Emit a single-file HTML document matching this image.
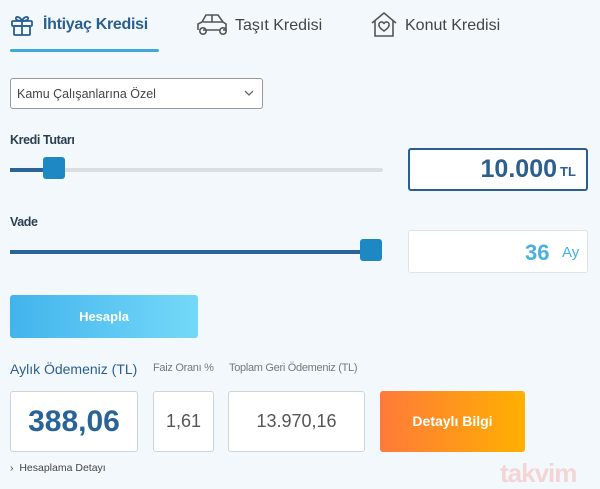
<!DOCTYPE html>
<html><head><meta charset="utf-8"><style>
*{margin:0;padding:0;box-sizing:border-box}
body{width:600px;height:487px;background:#f3f8fc;font-family:"Liberation Sans",sans-serif;position:relative;overflow:hidden}
.a{position:absolute;white-space:nowrap}
.box{position:absolute;background:#fff;border:1px solid #cfd4d8;border-radius:3px}
</style></head><body>
<svg class="a" style="left:10px;top:13px" width="24" height="24" viewBox="0 0 24 24" fill="none" stroke="#2a5f8f" stroke-width="1.8"><rect x="2" y="8" width="20" height="5" rx="1"/><rect x="4" y="13" width="16" height="9" rx="1"/><path d="M12 8v14M12 8C10 3 5 3 6 6c1 2 6 2 6 2M12 8c2-5 7-5 6-2-1 2-6 2-6 2"/></svg>
<div class="a" style="left:43px;top:16px;font-size:16px;font-weight:bold;color:#2a5f8f;letter-spacing:-0.3px">İhtiyaç Kredisi</div>
<div class="a" style="left:10px;top:49px;width:149px;height:3px;background:#3fa9d8;border-radius:2px"></div>
<svg class="a" style="left:195px;top:12px" width="34" height="26" viewBox="0 0 34 26" fill="none" stroke="#555" stroke-width="1.6"><path d="M3 18v-6l4-2 4-7h12l5 7 3 2v6h-3M8 18h17M8 10h20M17 3v7"/><circle cx="8" cy="19" r="3.2"/><circle cx="28" cy="19" r="3.2"/></svg>
<div class="a" style="left:235px;top:17px;font-size:16px;color:#444">Taşıt Kredisi</div>
<svg class="a" style="left:370px;top:10px" width="28" height="28" viewBox="0 0 28 28" fill="none" stroke="#555" stroke-width="1.6"><path d="M2 13L14 3l12 10M5 11v15h18V11"/><path d="M14 21c-4-3-5-4-5-6a2.5 2.5 0 015-1 2.5 2.5 0 015 1c0 2-1 3-5 6z"/></svg>
<div class="a" style="left:405px;top:17px;font-size:16px;color:#444">Konut Kredisi</div>
<div class="box" style="left:10px;top:78px;width:253px;height:31px;border-color:#999;background:#fff"></div>
<div class="a" style="left:17px;top:87px;font-size:12.5px;color:#444">Kamu Çalışanlarına Özel</div>
<svg class="a" style="left:243px;top:89px" width="12" height="8" viewBox="0 0 12 8" fill="none" stroke="#666" stroke-width="1.3"><path d="M2 2l4 4 4-4"/></svg>
<div class="a" style="left:10px;top:133px;font-size:12.5px;font-weight:bold;color:#2b3e50;letter-spacing:-0.4px">Kredi Tutarı</div>
<div class="a" style="left:10px;top:168px;width:373px;height:4px;background:#dcdfe2;border-radius:2px"></div>
<div class="a" style="left:10px;top:168px;width:40px;height:4px;background:#2a6496"></div>
<div class="a" style="left:43px;top:157px;width:22px;height:22px;background:#1e88c4;border-radius:3px"></div>
<div class="box" style="left:408px;top:148px;width:180px;height:43px;border:2px solid #2a5f8f"></div>
<div class="a" style="left:470px;top:155px;width:87px;text-align:right;font-size:25px;font-weight:bold;color:#2a5f8f">10.000</div>
<div class="a" style="left:560px;top:164px;font-size:13px;font-weight:bold;color:#2a5f8f">TL</div>
<div class="a" style="left:10px;top:215px;font-size:12.5px;font-weight:bold;color:#2b3e50;letter-spacing:-0.4px">Vade</div>
<div class="a" style="left:10px;top:250px;width:365px;height:4px;background:#2a6496"></div>
<div class="a" style="left:360px;top:239px;width:22px;height:22px;background:#1e88c4;border-radius:3px"></div>
<div class="box" style="left:408px;top:230px;width:180px;height:43px;border-color:#dfe3e6"></div>
<div class="a" style="left:525px;top:240px;font-size:22px;font-weight:bold;color:#4ab0e0">36</div>
<div class="a" style="left:562px;top:244px;font-size:15px;color:#4ab0e0">Ay</div>
<div class="a" style="left:10px;top:295px;width:188px;height:43px;border-radius:3px;background:linear-gradient(90deg,#42b4ec,#74d9f8);color:#fff;font-size:13px;font-weight:bold;text-align:center;line-height:43px">Hesapla</div>
<div class="a" style="left:10px;top:361px;font-size:14px;color:#2a5f8f">Aylık Ödemeniz (TL)</div>
<div class="a" style="left:153px;top:362px;font-size:11px;color:#777;letter-spacing:-0.3px">Faiz Oranı %</div>
<div class="a" style="left:229px;top:362px;font-size:11px;color:#777;letter-spacing:-0.3px">Toplam Geri Ödemeniz (TL)</div>
<div class="box" style="left:10px;top:391px;width:128px;height:61px;text-align:center;line-height:59px;font-size:30px;font-weight:bold;color:#2a6496">388,06</div>
<div class="box" style="left:153px;top:391px;width:61px;height:61px;text-align:center;line-height:59px;font-size:18px;color:#555">1,61</div>
<div class="box" style="left:228px;top:391px;width:137px;height:61px;text-align:center;line-height:59px;font-size:18px;color:#555">13.970,16</div>
<div class="a" style="left:380px;top:391px;width:145px;height:61px;border-radius:3px;background:linear-gradient(90deg,#ff7a3a,#ffb000);color:#fff;font-size:14px;font-weight:bold;text-align:center;line-height:61px">Detaylı Bilgi</div>
<div class="a" style="left:10px;top:462px;font-size:10.5px;color:#444">›&nbsp; Hesaplama Detayı</div>
<div class="a" style="left:500px;top:458px;font-size:26px;font-weight:bold;color:#f3d5d5;letter-spacing:-1px">takvim</div>
</body></html>
